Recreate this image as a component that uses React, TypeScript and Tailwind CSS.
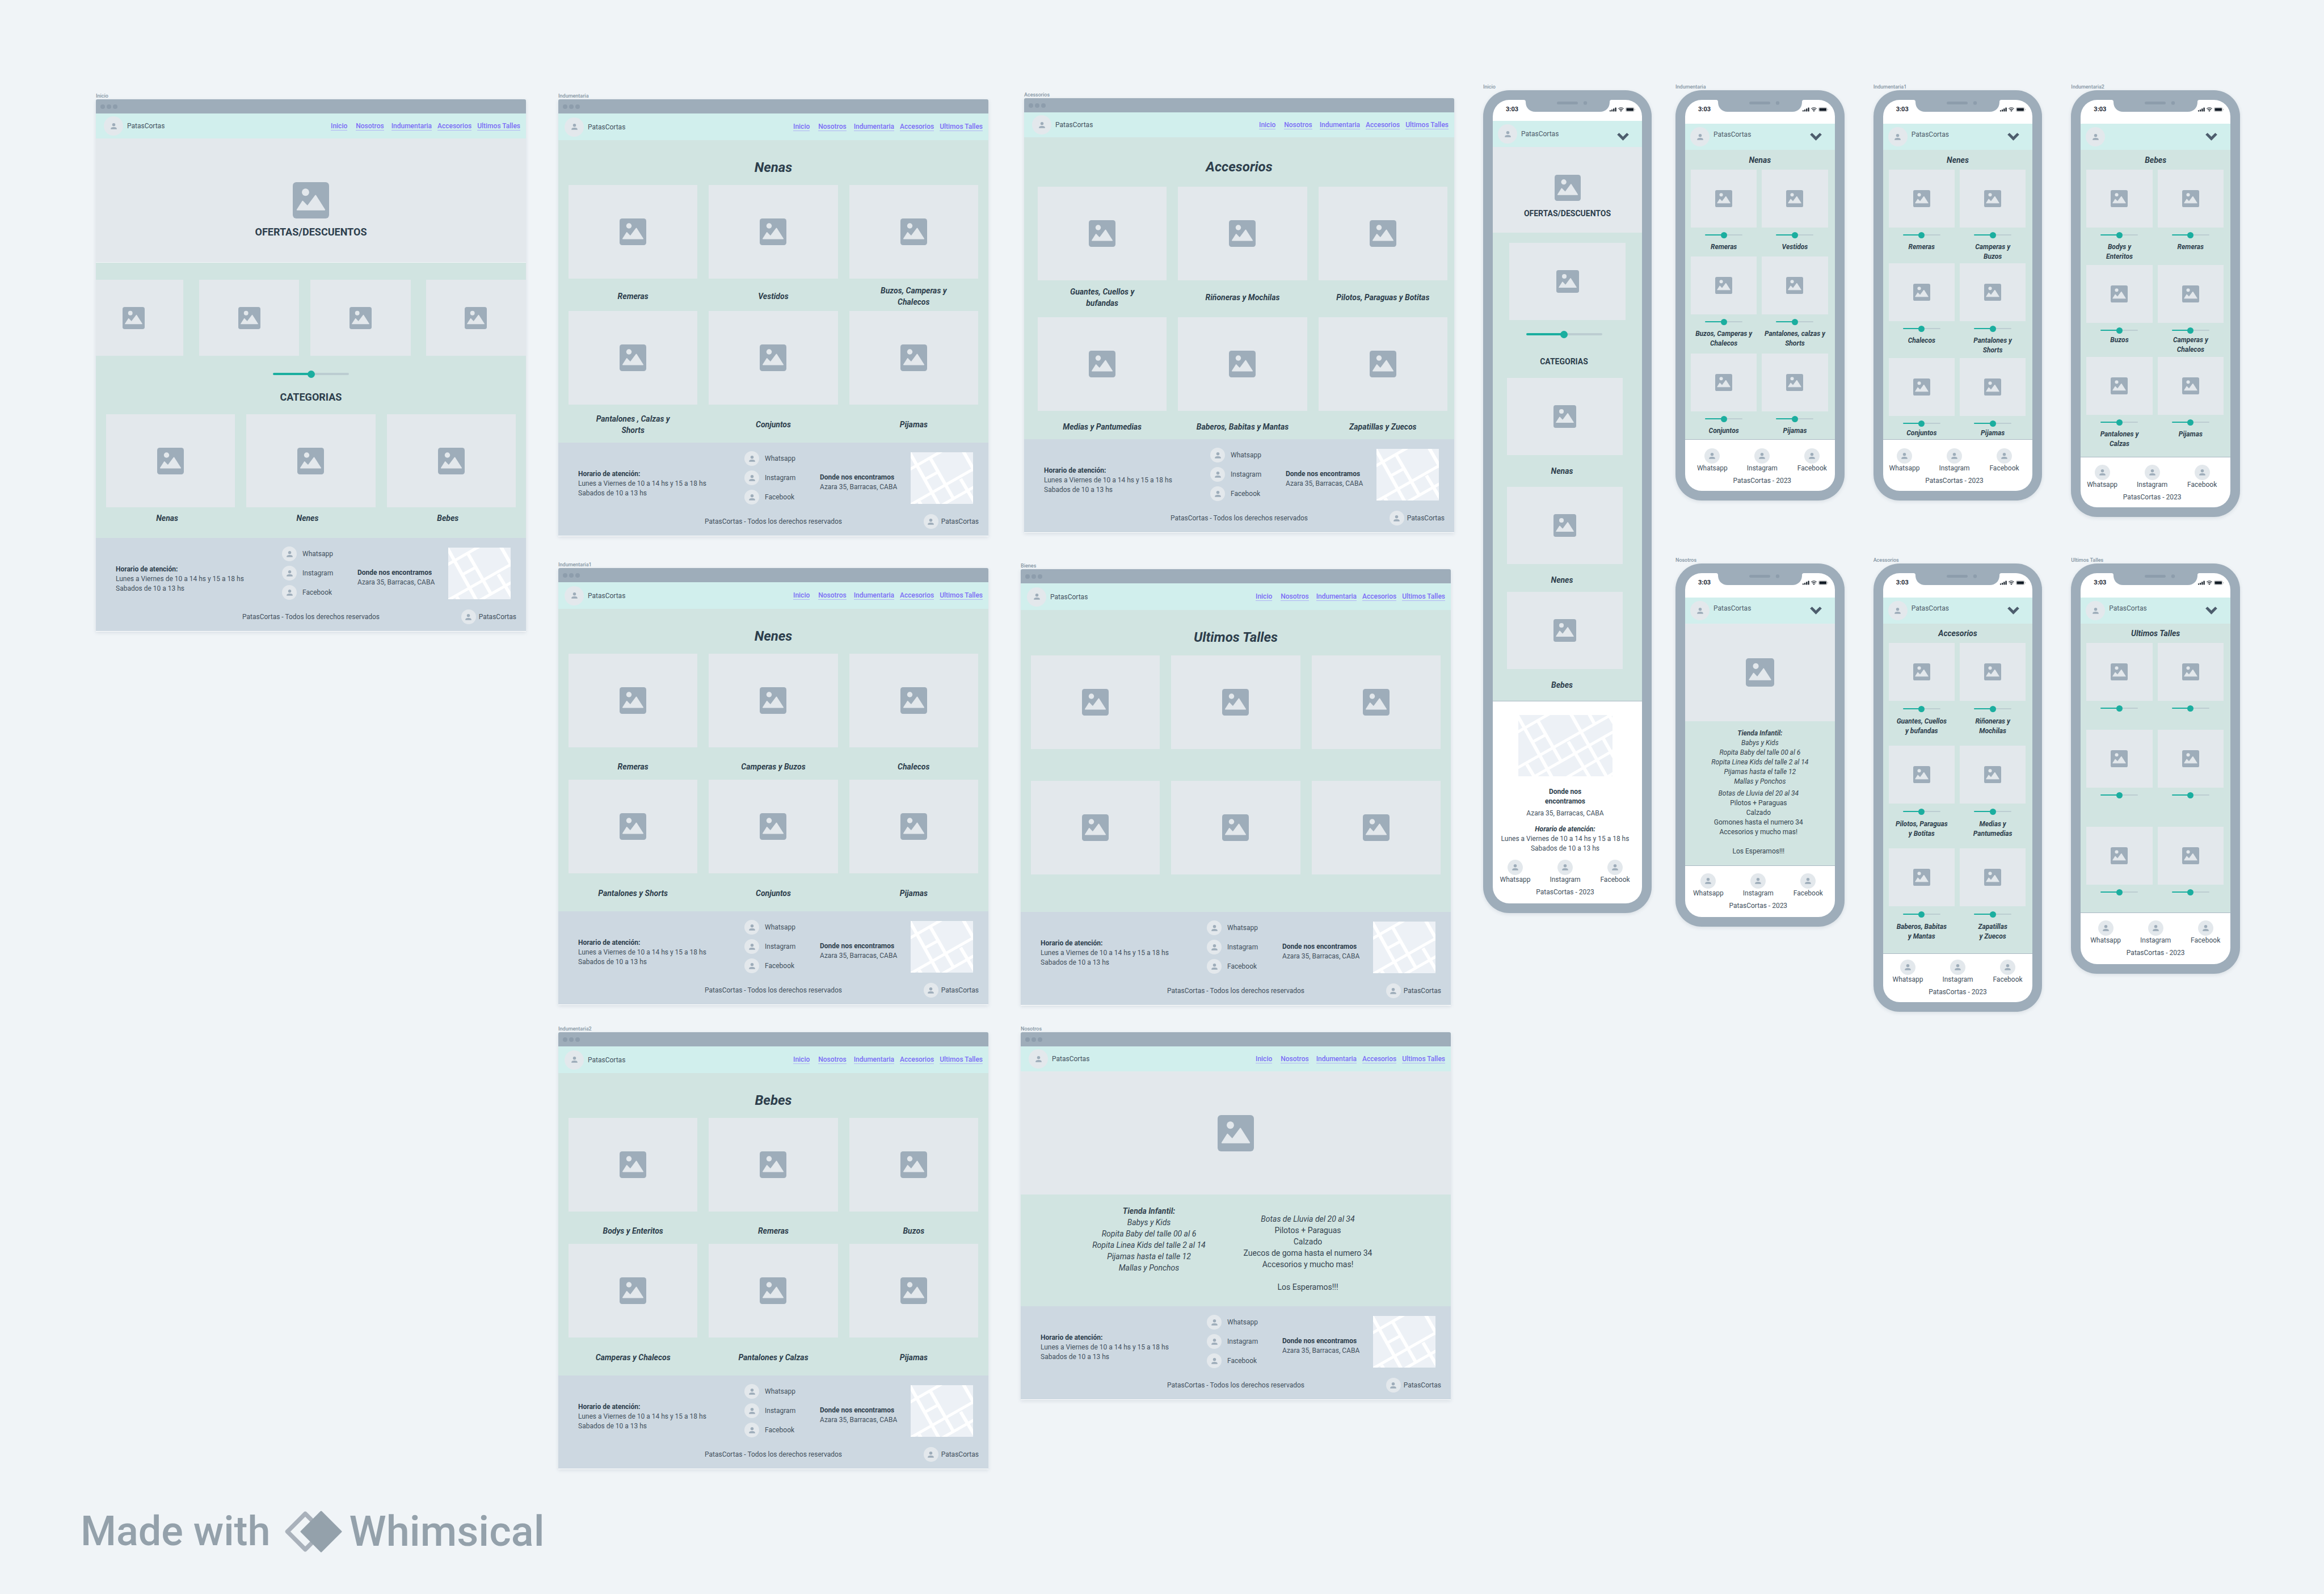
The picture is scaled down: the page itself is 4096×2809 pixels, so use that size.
import React from "react";

/* ---------- drawings ---------- */

function ImageIcon({ className }: { className: string }) {
  return (
    <svg viewBox="0 0 94 94" className={`shrink-0 ${className}`} aria-hidden="true">
      <rect width="94" height="94" rx="9" fill="#9eadba" />
      <circle cx="33" cy="26" r="9.5" fill="#e3e8ec" />
      <path
        d="M11.5 71.5 25.5 49.5 38 62.5 59 34.5 82.500 71.5Z"
        fill="#e3e8ec"
        stroke="#e3e8ec"
        strokeWidth="3"
        strokeLinejoin="round"
      />
    </svg>
  );
}

function Avatar({ className }: { className: string }) {
  return (
    <span className={`flex shrink-0 items-center justify-center rounded-full bg-[#e3e8ec] ${className}`}>
      <svg viewBox="0 0 46 48" className="w-[11px] h-[11px]" aria-hidden="true">
        <circle cx="23" cy="12.5" r="12" fill="#9eadba" />
        <path d="M0 47v-4c0-9 12-12 23-12s23 3 23 12v4z" fill="#9eadba" />
      </svg>
    </span>
  );
}

function MapPicture({ className }: { className: string }) {
  return (
    <div className={`overflow-hidden bg-[#edf1f6] ${className}`}>
      <svg viewBox="0 0 166 108" className="h-[108px] w-[166px] max-w-none" role="img" aria-label="Mapa">
        <g stroke="#ffffff" fill="none">
          <g strokeWidth="6">
            <path d="M-3-2 61 113" />
            <path d="M35 11 75 81" />
            <path d="M92-3 158 113" />
            <path d="M88 47 127 112" />
            <path d="M124-3 134 15" />
            <path d="M150 42 168 74" />
            <path d="M158-3 168 14" />
            <path d="M15 87 30 112" />
          </g>
          <g strokeWidth="5">
            <path d="M-3 31 60-5" />
            <path d="M-3 94 170-4" />
            <path d="M26 47 48 35" />
            <path d="M22 112 170 28" />
            <path d="M82 112 170 61" />
            <path d="M154 111 170 101" />
          </g>
        </g>
      </svg>
    </div>
  );
}

function Notch() {
  return (
    <svg viewBox="0 0 156 21" className="h-[21px] w-[156px]" aria-hidden="true">
      <path d="M0 0C3 0 4 1 4 4 4 14 11 21 21 21H135C145 21 152 14 152 4 152 1 153 0 156 0Z" fill="#9eadba" />
      <rect x="59" y="3" width="37" height="5" rx="2.500" fill="#8d9dac" />
      <circle cx="109" cy="5.500" r="3.200" fill="#8d9dac" />
    </svg>
  );
}

function StatusIcons() {
  return (
    <svg viewBox="0 0 203 36" className="h-[8px] w-[47px]" aria-hidden="true">
      <g fill="#131c26">
        <rect x="0" y="24" width="9" height="10" rx="2" />
        <rect x="14" y="18" width="9" height="16" rx="2" />
        <rect x="28" y="10" width="10" height="24" rx="2" />
        <rect x="43" y="2" width="10" height="32" rx="2" />
        <path d="M82 27Q90 21 98 27L90 35Z" />
        <rect x="133" y="7" width="56" height="22" rx="3" />
      </g>
      <path d="M69 12Q90-5 111 12M76 21Q90 9 104 21" stroke="#131c26" strokeWidth="5" fill="none" />
      <rect x="128" y="2" width="66" height="32" rx="8" stroke="#a7a9ab" strokeWidth="3" fill="none" />
      <path d="M198 12q5 2 5 6t-5 6z" fill="#a7a9ab" />
    </svg>
  );
}

function Logo() {
  return (
    <svg viewBox="0 0 102 74" className="h-[74px] w-[102px]" aria-hidden="true">
      <path
        d="M37 5.500 68.500 37 37 68.500 5.500 37Z"
        fill="none"
        stroke="#a9b1bb"
        strokeWidth="7.500"
        strokeLinejoin="round"
      />
      <path
        d="M65 2 100 37 65 72 30 37Z"
        fill="#94a1ab"
        stroke="#94a1ab"
        strokeWidth="3"
        strokeLinejoin="round"
      />
    </svg>
  );
}

/* ---------- shared parts ---------- */

function Tile({ className = "", icon }: { className?: string; icon: string }) {
  return (
    <div className={`flex items-center justify-center bg-[#e3e8ec] ${className}`}>
      <ImageIcon className={icon} />
    </div>
  );
}

function Slider({ small, label }: { small?: boolean; label: string }) {
  const size = small
    ? "h-[2px] w-[66px] [&::-webkit-slider-thumb]:size-[11px]"
    : "h-[4px] w-[134px] [&::-webkit-slider-thumb]:size-[13px]";
  return (
    <input
      type="range"
      defaultValue={50}
      aria-label={label}
      className={`block appearance-none rounded-full bg-linear-to-r from-[#1bae9f] from-50% to-[#bccdd1] to-50% [&::-webkit-slider-thumb]:appearance-none [&::-webkit-slider-thumb]:rounded-full [&::-webkit-slider-thumb]:bg-[#1bae9f] ${size}`}
    />
  );
}

function Board({ name, className = "", children }: { name: string; className?: string; children: React.ReactNode }) {
  return (
    <section className={className}>
      <h2 className="text-[9px] leading-[12px] font-medium text-[#8595a3]">{name}</h2>
      {children}
    </section>
  );
}

/* ---------- desktop pages ---------- */

const links = [
  { text: "Inicio", gap: "" },
  { text: "Nosotros", gap: "ml-[15px]" },
  { text: "Indumentaria", gap: "ml-[13px]" },
  { text: "Accesorios", gap: "ml-[10px]" },
  { text: "Ultimos Talles", gap: "ml-[10px]" },
];

function DesktopFooter() {
  return (
    <footer className="bg-[#cdd8e1] pt-[15px] pb-[12px] text-[12px] leading-[17px] text-[#42505d]">
      <div className="grid grid-cols-[293fr_133fr_160fr_110fr] items-center pr-[27px] pl-[35px]">
        <div className="pt-[20px]">
          <h4 className="font-bold text-[#2d3e4c]">Horario de atención:</h4>
          <p>Lunes a Viernes de 10 a 14 hs y 15 a 18 hs</p>
          <p>Sabados de 10 a 13 hs</p>
        </div>
        <ul className="flex flex-col gap-[8px]">
          {["Whatsapp", "Instagram", "Facebook"].map((item) => (
            <li key={item} className="flex items-center gap-[10px]">
              <Avatar className="size-[26px]" />
              {item}
            </li>
          ))}
        </ul>
        <div className="pt-[15px]">
          <h4 className="font-bold text-[#2d3e4c]">Donde nos encontramos</h4>
          <p>Azara 35, Barracas, CABA</p>
        </div>
        <MapPicture className="h-[91px]" />
      </div>
      <div className="mt-[17px] grid grid-cols-[1fr_auto_1fr] items-center px-[17px]">
        <p className="col-start-2">PatasCortas - Todos los derechos reservados</p>
        <div className="flex items-center gap-[5px] justify-self-end">
          <Avatar className="size-[26px]" />
          PatasCortas
        </div>
      </div>
    </footer>
  );
}

function Desktop({
  name,
  className,
  tall,
  children,
}: {
  name: string;
  className?: string;
  tall?: boolean;
  children: React.ReactNode;
}) {
  return (
    <Board name={name} className={className}>
      <div className="overflow-hidden rounded-t-[3px] border-b border-white bg-[#d1e4e1] shadow-[0_2px_6px_rgba(70,90,110,0.14)]">
        <div className="flex h-[25px] items-center gap-[3px] bg-[#9eadba] pl-[8px]">
          <span className="size-[8px] rounded-full bg-[#8d9dac]" />
          <span className="size-[8px] rounded-full bg-[#8d9dac]" />
          <span className="size-[8px] rounded-full bg-[#8d9dac]" />
        </div>
        <header
          className={`flex items-center bg-[#d1efed] pr-[10px] text-[12px] leading-[14px] ${
            tall ? "h-[47px] pl-[11px]" : "h-[44px] pl-[14px]"
          }`}
        >
          <Avatar className="size-[34px]" />
          <span className="ml-[7px] text-[#42505d]">PatasCortas</span>
          <nav className="ml-auto flex">
            {links.map((link) => (
              <a
                key={link.text}
                href="#"
                className={`border-b border-[#b0b4f5] font-medium text-[#7b6df6] ${link.gap}`}
              >
                {link.text}
              </a>
            ))}
          </nav>
        </header>
        {children}
        <DesktopFooter />
      </div>
    </Board>
  );
}

type DesktopRow = { labels: string[]; area: string };

function CatalogPage({
  name,
  title,
  rows,
  className,
  tall,
  heading,
  padding = "px-[18px]",
}: {
  name: string;
  title: string;
  rows: DesktopRow[];
  className?: string;
  tall?: boolean;
  heading: string;
  padding?: string;
}) {
  return (
    <Desktop name={name} className={className} tall={tall}>
      <h3
        className={`flex items-center justify-center pt-[16px] text-[24px] leading-[30px] font-bold text-[#2d3e4c] italic ${heading}`}
      >
        {title}
      </h3>
      {rows.map((row, r) => (
        <div key={r} className={`grid grid-cols-3 gap-x-[20px] ${padding}`}>
          {row.labels.map((label, i) => (
            <div key={i}>
              <Tile className="h-[165px]" icon="size-[47px]" />
              <p
                className={`flex items-center justify-center text-center text-[14px] leading-[20px] font-bold whitespace-pre-line text-[#2d3e4c] italic ${row.area}`}
              >
                {label}
              </p>
            </div>
          ))}
        </div>
      ))}
    </Desktop>
  );
}

function HomePage() {
  return (
    <Desktop name="Inicio" className="mt-[16px]">
      <div className="flex h-[219px] flex-col items-center border-b border-[#f0f4f7] bg-[#e3e8ec] pt-[77px]">
        <ImageIcon className="size-[64px]" />
        <h3 className="mt-[11px] text-[18px] leading-[26px] font-bold text-[#2d3e4c]">OFERTAS/DESCUENTOS</h3>
      </div>
      <div className="grid grid-cols-[182fr_196fr_203fr_176fr] pt-[30px]">
        <div className="pr-[28px]">
          <Tile className="h-[134px] pr-[22px]" icon="size-[39px]" />
        </div>
        <div className="pr-[20px]">
          <Tile className="h-[134px]" icon="size-[39px]" />
        </div>
        <div className="pr-[27px]">
          <Tile className="h-[134px]" icon="size-[39px]" />
        </div>
        <Tile className="h-[134px]" icon="size-[39px]" />
      </div>
      <div className="mt-[26px] flex h-[12px] items-center justify-center">
        <Slider label="Ofertas" />
      </div>
      <h3 className="mt-[22px] text-center text-[18px] leading-[26px] font-bold text-[#2d3e4c]">CATEGORIAS</h3>
      <div className="mt-[17px] grid grid-cols-3 gap-x-[20px] px-[18px]">
        {["Nenas", "Nenes", "Bebes"].map((label) => (
          <div key={label}>
            <Tile className="h-[164px]" icon="size-[47px]" />
            <p className="flex h-[54px] items-center justify-center pr-[12px] pb-[16px] text-[14px] leading-[20px] font-bold text-[#2d3e4c] italic">
              {label}
            </p>
          </div>
        ))}
      </div>
    </Desktop>
  );
}

const kidsLines = [
  "Babys y Kids",
  "Ropita Baby del talle 00 al 6",
  "Ropita Linea Kids del talle 2 al 14",
  "Pijamas hasta el talle 12",
  "Mallas y Ponchos",
];

function StoreText({ rubber }: { rubber: string }) {
  return (
    <>
      <p className="italic">Botas de Lluvia del 20 al 34</p>
      <p>Pilotos + Paraguas</p>
      <p>Calzado</p>
      <p>{rubber}</p>
      <p>Accesorios y mucho mas!</p>
      <br />
      <p>Los Esperamos!!!</p>
    </>
  );
}

function KidsText() {
  return (
    <div className="italic">
      <p className="font-bold">Tienda Infantil:</p>
      {kidsLines.map((line) => (
        <p key={line}>{line}</p>
      ))}
    </div>
  );
}

function AboutPage() {
  return (
    <Desktop name="Nosotros" className="mt-[35px] mr-[6px]">
      <Tile className="h-[217px]" icon="size-[64px]" />
      <div className="grid grid-cols-2 pr-[112px] pb-[24px] pl-[86px] text-center text-[14px] leading-[20px] text-[#34434f]">
        <div className="pt-[19px]">
          <KidsText />
        </div>
        <div className="pt-[33px]">
          <StoreText rubber="Zuecos de goma hasta el numero 34" />
        </div>
      </div>
    </Desktop>
  );
}

/* ---------- phone pages ---------- */

function PhoneFooter({ className = "" }: { className?: string }) {
  return (
    <footer className={`text-center text-[12px] leading-[17px] text-[#42505d] ${className}`}>
      <ul className="grid grid-cols-[88px_88px_88px] justify-center">
        {["Whatsapp", "Instagram", "Facebook"].map((item) => (
          <li key={item} className="flex flex-col items-center">
            <Avatar className="size-[27px]" />
            {item}
          </li>
        ))}
      </ul>
      <p className="mt-[5px]">PatasCortas - 2023</p>
    </footer>
  );
}

function Phone({
  name,
  home,
  brand = true,
  status = "h-[42px]",
  children,
}: {
  name: string;
  home?: boolean;
  brand?: boolean;
  status?: string;
  children: React.ReactNode;
}) {
  return (
    <Board name={name}>
      <div className="rounded-[46px] bg-[#9eadba] p-[17px] shadow-[0_2px_6px_rgba(70,90,110,0.14)]">
        <div className="relative overflow-hidden rounded-[29px] bg-white">
          <div className="absolute inset-x-0 top-0 flex justify-center">
            <Notch />
          </div>
          <div className={status}>
            <div className="flex h-[33px] items-center justify-between pr-[11px] pl-[23px]">
              <span className="text-[11px] leading-[14px] font-bold text-[#1d2833]">3:03</span>
              <StatusIcons />
            </div>
          </div>
          <header className="flex h-[46px] items-center bg-[#d1efed] pr-[23px] pl-[9px] text-[12px] leading-[17px] text-[#4d5b69]">
            <Avatar className="size-[34px]" />
            {brand && <span className={`ml-[7px] ${home ? "" : "pb-[7px]"}`}>PatasCortas</span>}
            <button type="button" aria-label="Menu" className={`ml-auto ${home ? "pt-[9px]" : ""}`}>
              <svg viewBox="0 0 90 60" className="block h-[14px] w-[21px]" aria-hidden="true">
                <path
                  d="M3 14 16 3 45 31 74 3 87 14 45 57Z"
                  fill="#4d5d6d"
                  stroke="#4d5d6d"
                  strokeWidth="4"
                  strokeLinejoin="round"
                />
              </svg>
            </button>
          </header>
          {children}
        </div>
      </div>
    </Board>
  );
}

type PhoneRow = { labels: string[]; size: string; tight?: boolean };

function PhoneCatalog({
  name,
  title,
  rows,
  footer,
  brand,
  status,
  heading = "h-[35px]",
  track = "h-[26px]",
}: {
  name: string;
  title: string;
  rows: PhoneRow[];
  footer: string;
  brand?: boolean;
  status?: string;
  heading?: string;
  track?: string;
}) {
  return (
    <Phone name={name} brand={brand} status={status}>
      <div className="border-b border-[#a9b8c2] bg-[#d1e4e1]">
        <h3
          className={`flex items-center justify-center text-[14px] leading-[20px] font-bold text-[#2d3e4c] italic ${heading}`}
        >
          {title}
        </h3>
        {rows.map((row, r) => (
          <div key={r} className={`grid grid-cols-2 gap-x-[9px] pr-[12px] pl-[10px] ${row.size}`}>
            {row.labels.map((label, i) => (
              <div key={i}>
                <Tile className="h-[102px]" icon="size-[30px]" />
                <div className={`flex items-center justify-center ${track}`}>
                  <Slider small label={label || title} />
                </div>
                <p
                  className={`text-center text-[12px] leading-[17px] font-bold whitespace-pre-line text-[#2d3e4c] italic ${
                    row.tight ? "-mt-[4px]" : ""
                  }`}
                >
                  {label}
                </p>
              </div>
            ))}
          </div>
        ))}
      </div>
      <PhoneFooter className={footer} />
    </Phone>
  );
}

function PhoneHome() {
  return (
    <Phone name="Inicio" home status="h-[37px]">
      <div className="flex h-[151px] flex-col items-center bg-[#e3e8ec] pt-[49px]">
        <ImageIcon className="size-[46px]" />
        <h3 className="mt-[12px] text-[14px] leading-[20px] font-bold text-[#2d3e4c]">OFERTAS/DESCUENTOS</h3>
      </div>
      <div className="border-b border-[#a9b8c2] bg-[#d1e4e1] pt-[18px]">
        <Tile className="mx-[29px] h-[136px]" icon="size-[40px]" />
        <div className="mt-[19px] flex h-[12px] items-center justify-center pr-[12px]">
          <Slider label="Ofertas" />
        </div>
        <h3 className="mt-[32px] pr-[12px] text-center text-[14px] leading-[20px] font-bold text-[#2d3e4c]">
          CATEGORIAS
        </h3>
        <div className="mt-[19px] pr-[34px] pl-[25px]">
          {[
            { label: "Nenas", area: "h-[56px]" },
            { label: "Nenes", area: "h-[49px] pt-[7px]" },
            { label: "Bebes", area: "h-[56px]" },
          ].map(({ label, area }) => (
            <div key={label}>
              <Tile className="h-[136px]" icon="size-[40px]" />
              <p
                className={`flex items-center justify-center pr-[10px] text-[14px] leading-[20px] font-bold text-[#2d3e4c] italic ${area}`}
              >
                {label}
              </p>
            </div>
          ))}
        </div>
      </div>
      <div className="pt-[24px] pr-[8px] text-center text-[12px] leading-[17px] text-[#42505d]">
        <MapPicture className="mx-auto w-[166px] h-[108px]" />
        <h4 className="mt-[19px] font-bold whitespace-pre-line text-[#2d3e4c]">{"Donde nos\nencontramos"}</h4>
        <p className="mt-[4px]">Azara 35, Barracas, CABA</p>
        <h4 className="mt-[11px] font-bold text-[#2d3e4c] italic">Horario de atención:</h4>
        <p>Lunes a Viernes de 10 a 14 hs y 15 a 18 hs</p>
        <p>Sabados de 10 a 13 hs</p>
        <PhoneFooter className="pt-[11px] pb-[11px]" />
      </div>
    </Phone>
  );
}

function PhoneAbout() {
  return (
    <Phone name="Nosotros" status="h-[43px]">
      <Tile className="h-[172px]" icon="size-[50px]" />
      <div className="border-b border-[#a9b8c2] bg-[#d1e4e1] pt-[13px] pb-[16px] text-center text-[12px] leading-[17px] text-[#34434f]">
        <KidsText />
        <div className="mt-[4px] pr-[5px]">
          <StoreText rubber="Gomones hasta el numero 34" />
        </div>
      </div>
      <PhoneFooter className="pt-[13px] pr-[6px] pb-[11px]" />
    </Phone>
  );
}

/* ---------- canvas ---------- */

export default function App() {
  return (
    <div className="flex min-h-screen flex-col bg-[#f0f4f7] font-['Roboto',sans-serif]">
      <main className="flex items-start pt-[147px] pr-[148px] pl-[169px]">
        <div className="min-w-0 flex-[758]">
          <HomePage />
        </div>

        <div className="ml-[57px] min-w-0 flex-[758]">
          <CatalogPage
            name="Indumentaria"
            title="Nenas"
            className="mt-[16px]"
            tall
            heading="h-[79px]"
            rows={[
              { labels: ["Remeras", "Vestidos", "Buzos, Camperas y\nChalecos"], area: "h-[57px] pt-[4px]" },
              { labels: ["Pantalones , Calzas y\nShorts", "Conjuntos", "Pijamas"], area: "h-[67px] pt-[2px]" },
            ]}
          />
          <CatalogPage
            name="Indumentaria1"
            title="Nenes"
            className="mt-[44px]"
            tall
            heading="h-[79px]"
            rows={[
              { labels: ["Remeras", "Camperas y Buzos", "Chalecos"], area: "h-[57px] pt-[10px]" },
              { labels: ["Pantalones y Shorts", "Conjuntos", "Pijamas"], area: "h-[67px] pt-[2px]" },
            ]}
          />
          <CatalogPage
            name="Indumentaria2"
            title="Bebes"
            className="mt-[36px]"
            tall
            heading="h-[79px]"
            rows={[
              { labels: ["Bodys y Enteritos", "Remeras", "Buzos"], area: "h-[57px] pt-[10px]" },
              { labels: ["Camperas y Chalecos", "Pantalones y Calzas", "Pijamas"], area: "h-[67px] pt-[2px]" },
            ]}
          />
        </div>

        <div className="ml-[57px] min-w-0 flex-[764]">
          <CatalogPage
            name="Acessorios"
            title="Accesorios"
            className="mt-[14px] ml-[6px]"
            heading="h-[87px]"
            padding="pl-[24px] pr-[12px]"
            rows={[
              {
                labels: ["Guantes, Cuellos y\nbufandas", "Riñoneras y Mochilas", "Pilotos, Paraguas y Botitas"],
                area: "h-[65px] pb-[5px]",
              },
              {
                labels: ["Medias y Pantumedias", "Baberos, Babitas y Mantas", "Zapatillas y Zuecos"],
                area: "h-[50px] pt-[5px]",
              },
            ]}
          />
          <CatalogPage
            name="Bienes"
            title="Ultimos Talles"
            className="mt-[52px] mr-[6px]"
            tall
            heading="h-[80px]"
            rows={[
              { labels: ["", "", ""], area: "h-[56px]" },
              { labels: ["", "", ""], area: "h-[66px]" },
            ]}
          />
          <AboutPage />
        </div>

        <div className="ml-[51px] min-w-0 flex-[297]">
          <PhoneHome />
        </div>

        <div className="ml-[42px] grid min-w-0 flex-[995] grid-cols-3 items-start gap-x-[51px] gap-y-[70px]">
          <PhoneCatalog
            name="Indumentaria"
            title="Nenas"
            footer="pt-[15px] pl-[8px] pb-[9px]"
            rows={[
              { labels: ["Remeras", "Vestidos"], size: "min-h-[153px]" },
              { labels: ["Buzos, Camperas y\nChalecos", "Pantalones, calzas y\nShorts"], size: "min-h-[171px]" },
              { labels: ["Conjuntos", "Pijamas"], size: "min-h-[151px]" },
            ]}
          />
          <PhoneCatalog
            name="Indumentaria1"
            title="Nenes"
            footer="pt-[15px] pr-[12px] pb-[9px]"
            rows={[
              { labels: ["Remeras", "Camperas y\nBuzos"], size: "min-h-[165px]" },
              { labels: ["Chalecos", "Pantalones y\nShorts"], size: "min-h-[167px]" },
              { labels: ["Conjuntos", "Pijamas"], size: "min-h-[143px]", tight: true },
            ]}
          />
          <PhoneCatalog
            name="Indumentaria2"
            title="Bebes"
            brand={false}
            footer="pt-[13px] pr-[12px] pb-[9px]"
            rows={[
              { labels: ["Bodys y\nEnteritos", "Remeras"], size: "min-h-[168px]" },
              { labels: ["Buzos", "Camperas y\nChalecos"], size: "min-h-[162px]", tight: true },
              { labels: ["Pantalones y\nCalzas", "Pijamas"], size: "min-h-[176px]" },
            ]}
          />
          <PhoneAbout />
          <PhoneCatalog
            name="Acessorios"
            title="Accesorios"
            status="h-[43px]"
            heading="h-[34px]"
            track="h-[28px]"
            footer="pt-[10px] pb-[9px]"
            rows={[
              { labels: ["Guantes, Cuellos\ny bufandas", "Riñoneras y\nMochilas"], size: "min-h-[181px]" },
              { labels: ["Pilotos, Paraguas\ny Botitas", "Medias y\nPantumedias"], size: "min-h-[181px]" },
              { labels: ["Baberos, Babitas\ny Mantas", "Zapatillas\ny Zuecos"], size: "min-h-[185px]" },
            ]}
          />
          <PhoneCatalog
            name="Ultimos Talles"
            title="Ultimos Talles"
            status="h-[43px]"
            heading="h-[34px]"
            footer="pt-[13px] pb-[11px]"
            rows={[
              { labels: ["", ""], size: "min-h-[153px]" },
              { labels: ["", ""], size: "min-h-[171px]" },
              { labels: ["", ""], size: "min-h-[151px]" },
            ]}
          />
        </div>
      </main>

      <footer className="mt-auto flex items-center pb-[73px] pl-[142px] leading-none font-medium text-[#94a1ab]">
        <span className="text-[72px]">Made with</span>
        <span className="ml-[24px]">
          <Logo />
        </span>
        <span className="ml-[13px] text-[74px]">Whimsical</span>
      </footer>
    </div>
  );
}
